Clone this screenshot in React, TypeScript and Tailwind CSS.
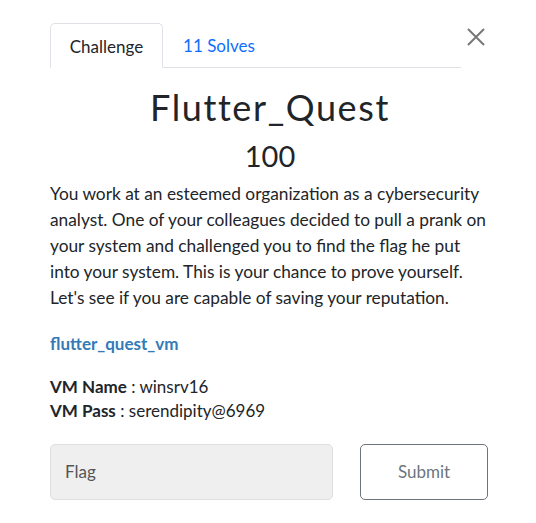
import React from "react";

export default function App() {
  return (
    <div className="w-[536px] h-[523px] bg-white relative" style={{ fontFamily: "Lato, 'Liberation Sans', sans-serif" }}>
      <button className="absolute left-[466px] top-[27px] w-[20px] h-[20px] text-[#777]">
        <svg width="20" height="20" viewBox="0 0 20 20" fill="none" stroke="currentColor" strokeWidth="2">
          <path d="M2 2 L18 18 M18 2 L2 18" />
        </svg>
      </button>
      <div className="pl-[50px] pr-[75px] pt-[23px]">
        <div className="flex border-b border-[#dee2e6] h-[45px]">
          <div className="border border-[#dee2e6] border-b-white -mb-px rounded-t-[5px] w-[113px] flex items-center justify-center pt-[2px] text-[17px] text-[#212529] bg-white">
            Challenge
          </div>
          <div className="w-[112px] flex items-center justify-center pt-[2px] text-[17px] text-[#0d6efd]">
            11 Solves
          </div>
        </div>
      </div>
      <div className="pl-[50px] pr-[46px]">
        <h1 className="text-center text-[36px] font-normal tracking-[1.6px] text-[#212529] leading-[40px] mt-[19px]">Flutter_Quest</h1>
        <div className="text-center text-[29px] font-normal text-[#212529] leading-[34px] mt-[12px]">100</div>
        <p className="text-[17.3px] leading-[26px] text-[#212529] mt-[8px]">
          You work at an esteemed organization as a cybersecurity analyst. One of your colleagues decided to pull a prank on your system and challenged you to find the flag he put into your system. This is your chance to prove yourself. Let's see if you are capable of saving your reputation.
        </p>
        <a className="block mt-[20px] text-[17px] font-bold text-[#337ab7] leading-[26px]">flutter_quest_vm</a>
        <div className="mt-[18px] text-[17px] leading-[24px] text-[#212529]">
          <div><b>VM Name</b> : winsrv16</div>
          <div><b>VM Pass</b> : serendipity@6969</div>
        </div>
        <div className="flex mt-[21px] gap-[27px] pr-[2px]">
          <div className="w-[283px] h-[56px] bg-[#efefef] border border-[#dedede] rounded-[5px] flex items-center px-[14px] text-[17px] text-[#555]">Flag</div>
          <button className="w-[128px] h-[56px] border border-[#6c757d] rounded-[5px] text-[17px] text-[#6c757d]">Submit</button>
        </div>
      </div>
    </div>
  );
}
